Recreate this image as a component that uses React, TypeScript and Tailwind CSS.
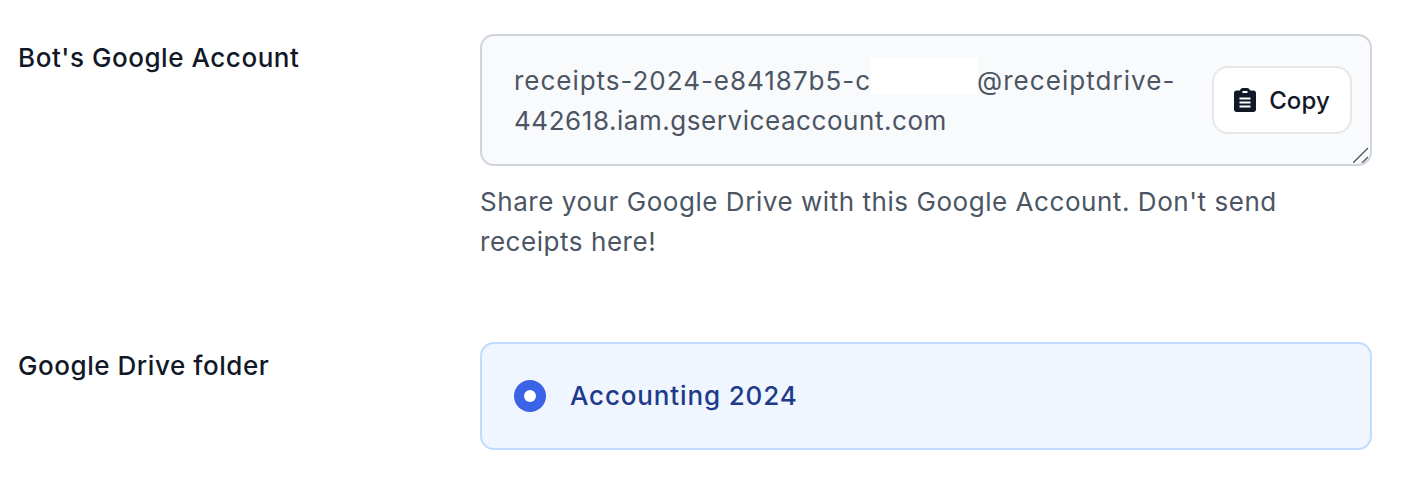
const font = "font-['Inter','Noto_Sans',sans-serif]"

function ClipboardIcon() {
  return (
    <svg viewBox="0 0 22 24" width="22" height="24" fill="#111827" aria-hidden="true">
      <path
        fillRule="evenodd"
        d="M6 2.500C6.300 1 7.400 0 8.800 0h4.400c1.400 0 2.500 1 2.800 2.500h3.500c1.400 0 2.500 1.100 2.500 2.500v16.500c0 1.400-1.100 2.500-2.500 2.500h-17C1.100 24 0 22.900 0 21.500V5c0-1.400 1.100-2.500 2.500-2.500H6zM8.500 3v2h5V3h-5zM5.500 9.500v2h11v-2h-11zm0 4v2h11v-2h-11zm0 4v2h11v-2h-11z"
      />
    </svg>
  )
}

function ResizeHandle() {
  return (
    <svg viewBox="0 0 16 16" width="16" height="16" className="absolute bottom-[1px] right-[1px]" aria-hidden="true">
      <path d="M1 16 16 1M10 16l6-6" stroke="#ffffff" strokeWidth="1" fill="none" />
      <path d="M0 16 15 1M9 16l6-6" stroke="#4b5563" strokeWidth="1.400" fill="none" />
    </svg>
  )
}

export default function App() {
  return (
    <div className={`${font} h-[480px] w-[1402px] overflow-hidden bg-white`}>
      <div className="grid grid-cols-[462px_892px] pl-[18px] pt-[34px]">
        <p className="pt-[7px] text-[26px] leading-[34px] font-medium tracking-[0.55px] text-[#111827]">
          Bot's Google Account
        </p>
        <div>
          <div className="relative flex h-[132px] items-start justify-between overflow-hidden rounded-[14px] border-2 border-[#d1d5db] bg-[#f9fafb] pl-[32px] pr-[18px] pt-[25px]">
            <p className="w-[670px] text-[26px] leading-[40px] tracking-[0.55px] text-[#4b5563]">
              <span className="tracking-[0.97px]">receipts-2024-e84187b5-c</span>
              <span className="-mt-[4px] inline-block h-[37px] w-[106px] bg-white align-top" />
              <span className="tracking-[1.05px]">@receiptdrive-</span>
              <br />
              442618.iam.gserviceaccount.com
            </p>
            <button
              type="button"
              className="mt-[5px] flex h-[68px] w-[140px] items-center justify-center gap-[13px] rounded-[16px] border-2 border-[#e5e7eb] bg-white text-[24px] font-medium tracking-[0.1px] text-[#111827]"
            >
              <ClipboardIcon />
              <span className="pt-[2px]">Copy</span>
            </button>
            <ResizeHandle />
          </div>
          <p className="mt-[16px] text-[26px] leading-[40px] tracking-[0.55px] text-[#4b5563]">
            Share your Google Drive with this Google Account. Don't send receipts here!
          </p>
        </div>
      </div>
      <div className="mt-[80px] grid grid-cols-[462px_892px] pl-[18px]">
        <p className="pt-[7px] text-[26px] leading-[34px] font-medium tracking-[0.55px] text-[#111827]">
          Google Drive folder
        </p>
        <label className="flex h-[108px] items-center gap-[24px] rounded-[14px] border-2 border-[#bfdbfe] bg-[#eff6ff] pl-[32px]">
          <span className="flex h-[32px] w-[32px] items-center justify-center rounded-full bg-[#3b63e6]">
            <span className="h-[12px] w-[12px] rounded-full bg-white" />
          </span>
          <span className="-mt-[2px] text-[26px] font-medium tracking-[0.85px] text-[#1e3a8a]">Accounting 2024</span>
        </label>
      </div>
    </div>
  )
}
